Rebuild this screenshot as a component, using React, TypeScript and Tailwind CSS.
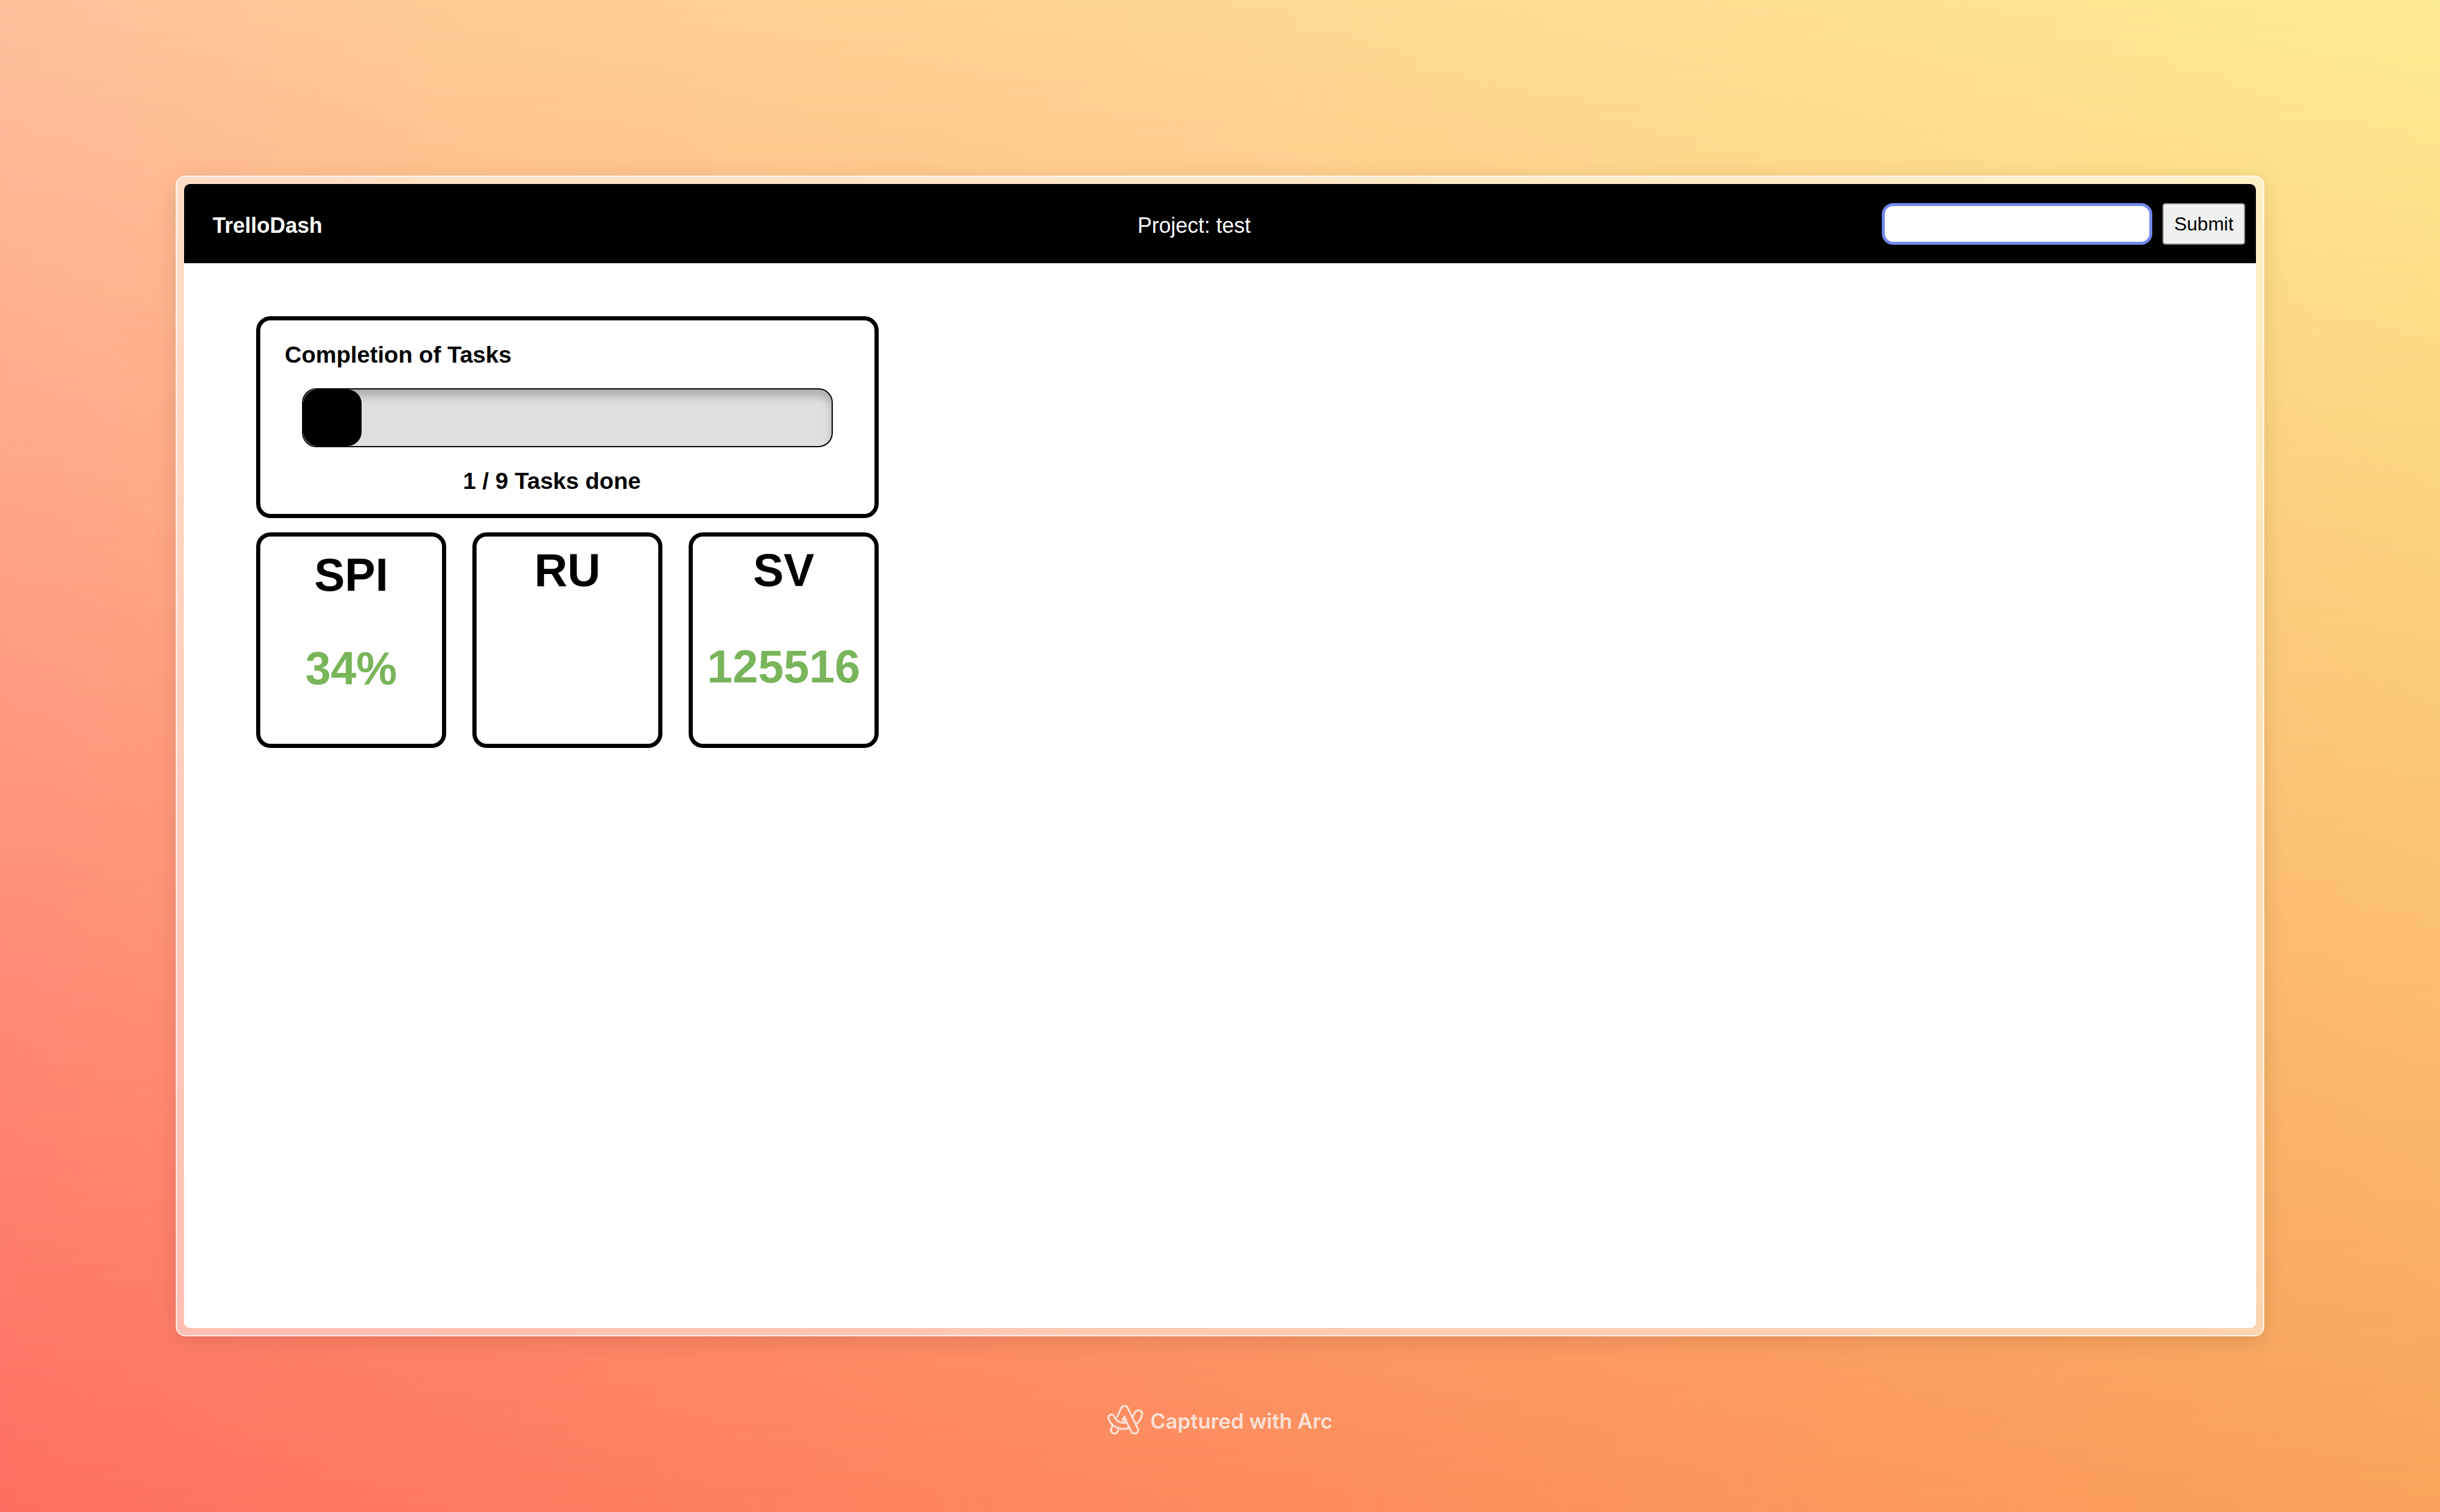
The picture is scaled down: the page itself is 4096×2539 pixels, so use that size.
import React from "react";

function ArcLogo() {
  return (
    <svg
      viewBox="86 92 223 185"
      className="h-[50px] w-[60px] shrink-0 overflow-visible"
      fill="none"
      stroke="currentColor"
      strokeWidth="12"
      strokeLinecap="round"
      strokeLinejoin="round"
      aria-hidden="true"
    >
      <path d="M146 168 L172 112 Q178 98 192 98 Q206 98 213 112 L276 240 C282 254 272 271 256 271 Q241 271 235 259 L205 198" />
      <path d="M245 164 L260 136 C266 126 280 123 291 128 C302 134 305 145 302 156 C296 178 284 197 267 212" />
      <path d="M205 204 C170 209 140 194 127 163 C122 152 110 150 101 155 C92 161 90 171 94 181 C112 226 165 255 222 236" />
      <path d="M119 216 L110 241 C104 254 114 271 130 271 Q142 271 148 261 L157 240" />
      <path d="M192 166 L180 188 Q190 194 203 191 Z" />
    </svg>
  );
}

function Header() {
  return (
    <header className="flex h-[133px] items-center bg-black pl-12 pr-[18px] text-[36px] leading-[44px] text-white">
      <h1 className="w-[45.5%] pt-[6px] font-bold">TrelloDash</h1>
      <p className="pt-[6px]">Project: test</p>
      <form className="ml-auto flex gap-[17px]" onSubmit={(e) => e.preventDefault()}>
        <input
          type="text"
          aria-label="Project name"
          className="h-[70px] w-[454px] rounded-[19px] border-[5px] border-[#7489f0] bg-white px-3 text-[32px] text-black outline-none"
        />
        <button
          type="submit"
          className="h-[70px] w-[139px] rounded-[5px] border-2 border-[#858585] bg-[#f0f0f0] text-[32px] leading-[36px] text-black"
        >
          Submit
        </button>
      </form>
    </header>
  );
}

function CompletionCard({ done, total }: { done: number; total: number }) {
  const percent = Math.round((done / total) * 100);
  return (
    <section className="rounded-[24px] border-[7px] border-black px-[41px] pb-[33px] pt-9 text-[39px] font-bold leading-[44px]">
      <h2>Completion of Tasks</h2>
      <div
        role="progressbar"
        aria-label="Completion of Tasks"
        aria-valuenow={percent}
        className="mx-[29px] mt-[34px] h-[99px] overflow-hidden rounded-[24px] border-2 border-black bg-[#e0e0e0] shadow-[inset_0_12px_14px_rgba(0,0,0,0.22)]"
      >
        <div className="h-full rounded-[24px] bg-black" style={{ width: `${percent}%` }} />
      </div>
      <p className="mt-[35px] pr-[52px] text-center">
        {done} / {total} Tasks done
      </p>
    </section>
  );
}

function Metric({ name, value, className }: { name: string; value?: string; className: string }) {
  return (
    <section
      className={`flex h-[362px] flex-col items-center rounded-[24px] border-[7px] border-black text-[77px] font-bold leading-[88px] ${className}`}
    >
      <h2>{name}</h2>
      {value && <p className="text-[#79b55a]">{value}</p>}
    </section>
  );
}

export default function App() {
  return (
    <div className="relative isolate flex min-h-screen flex-col items-center bg-linear-to-r from-[#ff6f61] to-[#f9a45a] px-[295px] pt-[295px] font-['Liberation_Sans',Arial,sans-serif] text-black">
      {/* Upper half of the backdrop, fading into the warmer lower gradient */}
      <div className="absolute inset-0 -z-10 bg-[linear-gradient(to_right,#ffc09c_0%,#ffcc94_18%,#ffd794_50%,#feec92_100%)] [mask-image:linear-gradient(to_bottom,black,transparent)]" />
      <div className="w-full rounded-[16px] border-2 border-white/70 bg-white/50 p-3 shadow-[0_8px_40px_rgba(0,0,0,0.11)]">
        <div className="min-h-[1921px] overflow-hidden rounded-[10px] bg-white">
          <Header />
          <main className="ml-[121px] mt-[89px] flex w-[1045px] flex-col gap-6">
            <CompletionCard done={1} total={9} />
            <div className="grid grid-cols-3 gap-[44px]">
              <Metric name="SPI" value="34%" className="gap-[69px] pt-5" />
              <Metric name="RU" className="pt-3" />
              <Metric name="SV" value="125516" className="gap-[74px] pt-3" />
            </div>
          </main>
        </div>
      </div>
      <footer className="mt-[113px] flex items-center gap-3 font-[Inter,sans-serif] text-[35px] font-semibold leading-[50px] text-[#fee1d4]">
        <ArcLogo />
        <span className="pt-1">Captured with Arc</span>
      </footer>
    </div>
  );
}
